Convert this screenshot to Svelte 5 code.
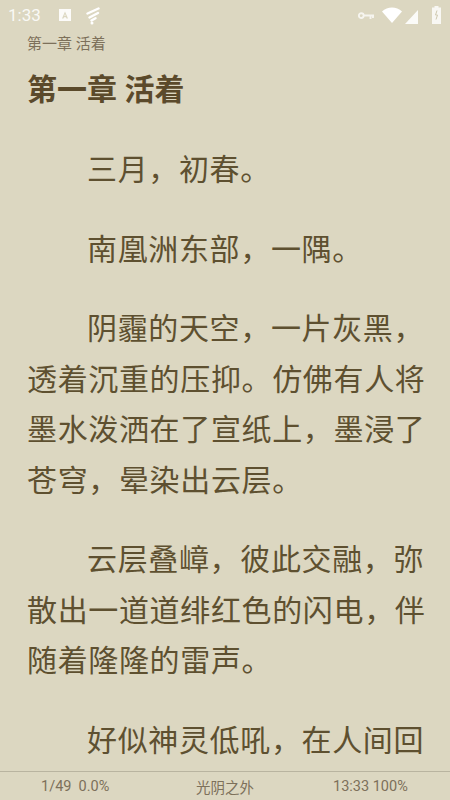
<script>
    let paragraphs = [
        '三月，初春。',
        '南凰洲东部，一隅。',
        '阴霾的天空，一片灰黑，透着沉重的压抑。仿佛有人将墨水泼洒在了宣纸上，墨浸了苍穹，晕染出云层。',
        '云层叠嶂，彼此交融，弥散出一道道绯红色的闪电，伴随着隆隆的雷声。',
        '好似神灵低吼，在人间回'
    ];
</script>

<div class="page">
    <div class="status">
        <span class="time">1:33</span>
        <svg class="ic-a" width="12" height="12" viewBox="0 0 12 12">
            <path fill="#fff" fill-rule="evenodd" d="M0 0h12v12H0z M6 2.500 3 9.500h1.500l.5-1.300h2l.5 1.300H9z M6 4.700l.6 2.200H5.400z" opacity=".9"/>
        </svg>
        <svg class="ic-bolt" width="14" height="18" viewBox="0 0 14 18">
            <path fill="none" stroke="#fff" stroke-width="2.400" stroke-linecap="round" d="M1.500 6.500 12.500 1.500M3.500 10.500 12 6M5.500 13.500l4-2.300"/>
            <circle cx="6" cy="16" r="1.500" fill="#fff"/>
        </svg>
        <div class="status-right">
            <svg class="key" width="16" height="8" viewBox="0 0 16 8">
                <path fill="none" stroke="#fff" stroke-width="1.900" d="M6 3.500h10M12.500 3.500V7M15 3.500V6"/>
                <circle cx="3.300" cy="3.600" r="2.400" fill="none" stroke="#fff" stroke-width="1.900"/>
            </svg>
            <svg width="20" height="16" viewBox="0 0 20 16">
                <path fill="#fff" d="M0 4.500C5.500 -1 14.500 -1 20 4.500L10 16z"/>
            </svg>
            <svg class="signal" width="13" height="14" viewBox="0 0 13 14">
                <path fill="#fff" d="M13 0v14H0z"/>
            </svg>
            <svg class="batt" width="9" height="18" viewBox="0 0 9 18">
                <path fill="#fff" fill-opacity=".8" d="M2.500 0h4v1.500H9V18H0V1.500h2.500z"/>
                <path fill="none" stroke="#cfc9b0" stroke-width="1" d="M5 4.500 3.500 9h2L4 13.500"/>
            </svg>
        </div>
    </div>
    <div class="chapter-small">第一章 活着</div>
    <h1>第一章 活着</h1>
    <div class="content">
        {#each paragraphs as p}
            <p>{p}</p>
        {/each}
    </div>
    <div class="footer">
        <span class="f-left">1/49&nbsp;&nbsp;0.0%</span>
        <span class="f-mid">光阴之外</span>
        <span class="f-right">13:33 100%</span>
    </div>
</div>

<style>
    :global(body) {
        margin: 0;
        background: #dcd7c1;
    }

    .page {
        width: 450px;
        height: 800px;
        display: flex;
        flex-direction: column;
        overflow: hidden;
        background: #dcd7c1;
        font-family: Roboto, "Noto Sans CJK SC", sans-serif;
    }

    .status {
        height: 30px;
        flex: none;
        display: flex;
        align-items: center;
        padding: 0 9px 0 8px;
        box-sizing: border-box;
        color: #fff;
    }

    .time {
        font-size: 17px;
        opacity: .85;
        width: 51px;
    }

    .ic-a {
        margin-right: 15px;
    }

    .ic-bolt {
        margin-top: 1px;
    }

    .status-right {
        margin-left: auto;
        display: flex;
        align-items: center;
        gap: 3px;
    }

    .key {
        opacity: .75;
        margin-right: 5px;
        margin-top: 1px;
    }

    .signal {
        margin-top: 4px;
        opacity: .9;
    }

    .batt {
        margin-left: 11px;
    }

    .chapter-small {
        flex: none;
        height: 29px;
        line-height: 29px;
        padding-left: 27px;
        font-size: 15px;
        color: #7d705a;
    }

    h1 {
        flex: none;
        margin: 0;
        padding: 0 27px;
        height: 62px;
        line-height: 61px;
        font-size: 30px;
        font-weight: 700;
        color: #5b4a2b;
    }

    .content {
        flex: 1;
        min-height: 0;
        overflow: hidden;
        padding: 24px 15px 0 27px;
    }

    p {
        margin: 0 0 29.300px;
        font-size: 30px;
        line-height: 50.400px;
        letter-spacing: .65px;
        text-indent: 60px;
        color: #5e5030;
    }

    .footer {
        flex: none;
        height: 29px;
        border-top: 1px solid #b9b4a0;
        display: grid;
        grid-template-columns: 1fr 1fr 1fr;
        align-items: center;
        font-size: 14.500px;
        color: #7d705a;
        box-sizing: border-box;
    }

    .f-left {
        padding-left: 41px;
    }

    .f-mid {
        text-align: center;
    }

    .f-right {
        padding-left: 33px;
    }
</style>
